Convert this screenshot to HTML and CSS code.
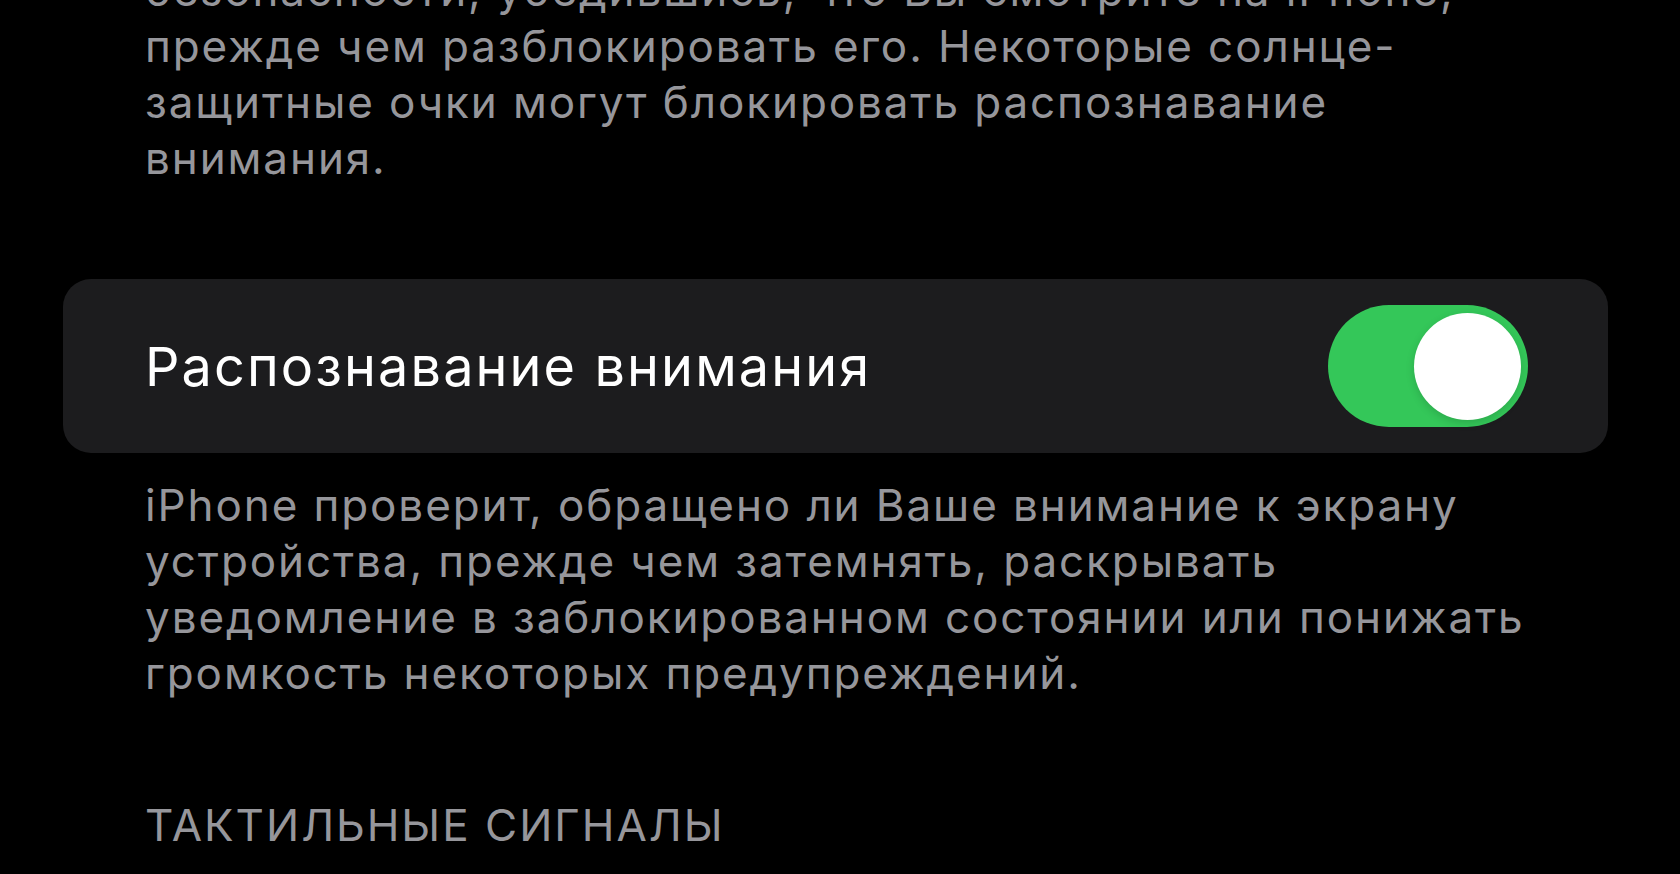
FILE: index.html
```html
<!DOCTYPE html>
<html lang="ru">
<head>
<meta charset="utf-8">
<title>Face ID и код-пароль</title>
<link rel="stylesheet" href="styles.css">
</head>
<body>
<main class="settings">
  <p class="footnote footnote--top">безопасности, убедившись, что Вы смотрите на iPhone,<br>прежде чем разблокировать его. Некоторые солнце-<br>защитные очки могут блокировать распознавание<br>внимания.</p>

  <section class="group">
    <div class="row">
      <span class="row-title">Распознавание внимания</span>
      <span class="switch is-on" role="switch" aria-checked="true"><span class="switch-knob"></span></span>
    </div>
  </section>

  <p class="footnote footnote--after">iPhone проверит, обращено ли Ваше внимание к экрану<br>устройства, прежде чем затемнять, раскрывать<br>уведомление в заблокированном состоянии или понижать<br>громкость некоторых предупреждений.</p>

  <h2 class="group-header">ТАКТИЛЬНЫЕ СИГНАЛЫ</h2>
</main>
</body>
</html>
```

FILE: styles.css
```css
html, body {
  margin: 0;
  padding: 0;
  background: #000;
  height: 100%;
  overflow: hidden;
}

body {
  font-family: Inter, "Noto Sans", "DejaVu Sans", sans-serif;
  -webkit-font-smoothing: antialiased;
}

.settings {
  display: flex;
  flex-direction: column;
  padding: 0 72px 0 63px;
}

.footnote {
  margin: 0;
  padding-left: 82px;
  font-size: 44px;
  line-height: 56px;
  letter-spacing: 1.9px;
  color: #96969b;
  white-space: nowrap;
}

.footnote--top {
  margin-top: -38px;
}

.group {
  margin-top: 93px;
  background: #1c1c1e;
  border-radius: 28px;
}

.row {
  display: flex;
  align-items: center;
  justify-content: space-between;
  padding: 26px 80px 26px 82px;
}

.row-title {
  font-size: 54px;
  letter-spacing: 2.1px;
  color: #fff;
}

.switch {
  display: flex;
  align-items: center;
  justify-content: flex-end;
  width: 200px;
  height: 122px;
  padding: 0 7px;
  box-sizing: border-box;
  border-radius: 61px;
  background: #34c759;
}

.switch-knob {
  width: 107px;
  height: 107px;
  border-radius: 50%;
  background: #fff;
  box-shadow: 0 3px 8px rgba(0, 0, 0, 0.15);
}

.footnote--after {
  margin-top: 24px;
}

.group-header {
  margin: 96px 0 0;
  padding-left: 82px;
  font-size: 44px;
  line-height: 56px;
  letter-spacing: 2px;
  font-weight: 400;
  color: #96969b;
}
```
